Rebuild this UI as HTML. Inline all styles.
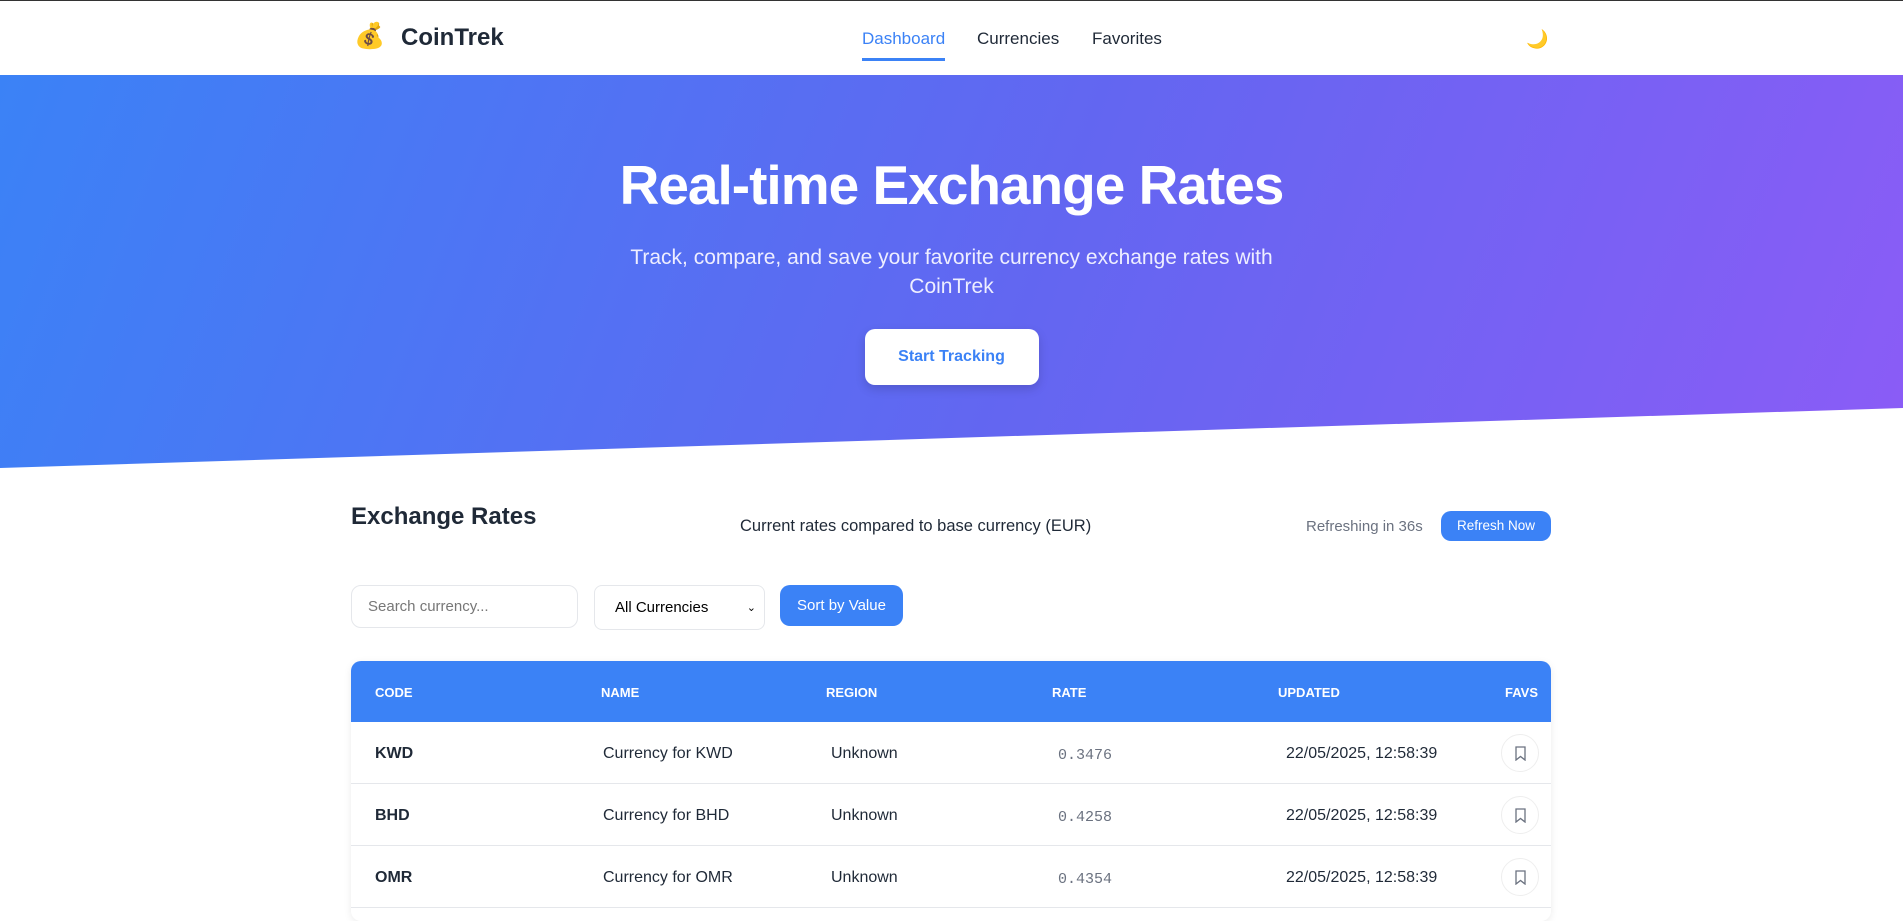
<!DOCTYPE html>
<html><head><meta charset="utf-8"><style>
*{box-sizing:border-box;margin:0;padding:0}
body{width:1903px;height:912px;overflow:hidden;background:#fff;font-family:"Liberation Sans",sans-serif;color:#1f2937;border-top:1px solid #333}
.nav{height:74px;position:relative}
.logo{position:absolute;left:354px;top:21px;font-size:25px}
.brand{position:absolute;left:401px;top:23px;font-size:24px;font-weight:700;color:#1f2937}
.links a{position:absolute;top:28px;font-size:17px;color:#1f2937;text-decoration:none}
.links a.act{color:#3b82f6;border-bottom:3px solid #3b82f6;padding-bottom:9px}
.moon{position:absolute;left:1526px;top:28px;font-size:18px}
.hero{position:absolute;top:75px;left:0;width:1903px;height:395px;background:linear-gradient(110deg,#3b82f6 0%,#6366f1 55%,#8b5cf6 100%);clip-path:polygon(0 0,100% 0,100% 333px,0 393px);text-align:center;color:#fff}
.hero h1{font-size:55px;font-weight:700;margin-top:78px;letter-spacing:-1px}
.hero p{font-size:21px;line-height:29px;width:700px;margin:26px auto 0;color:#eef}
.hero .btn{display:inline-block;margin-top:28px;width:174px;height:56px;line-height:56px;background:#fff;color:#3b82f6;border-radius:10px;font-weight:700;font-size:16px;box-shadow:0 4px 10px rgba(0,0,0,.15)}
.abs{position:absolute}
.table{position:absolute;left:351px;top:661px;width:1200px;height:260px;border-radius:10px;overflow:hidden;box-shadow:0 2px 8px rgba(0,0,0,.08)}
.th{height:61px;background:#3b82f6;color:#fff;font-size:13px;font-weight:700;position:relative}
.th span{position:absolute;top:24px}
.row{height:62px;border-bottom:1px solid #e5e7eb;position:relative;font-size:16px}
.row span{position:absolute;top:23px}
.mono{font-family:"Liberation Mono",monospace;color:#6b7280;font-size:15px}
.fav{position:absolute;left:1150px;top:12px;width:38px;height:38px;border:1px solid #eee;border-radius:50%}
</style></head><body>
<div class="nav">
<span class="logo">💰</span><span class="brand">CoinTrek</span>
<div class="links"><a class="act" style="left:862px">Dashboard</a><a style="left:977px">Currencies</a><a style="left:1092px">Favorites</a></div>
<span class="moon">🌙</span>
</div>
<div class="hero"><h1>Real-time Exchange Rates</h1><p>Track, compare, and save your favorite currency exchange rates with CoinTrek</p><div class="btn">Start Tracking</div></div>
<div class="abs" style="left:351px;top:503px;font-size:24px;font-weight:600">Exchange Rates</div>
<div class="abs" style="left:740px;top:517px;font-size:16.5px">Current rates compared to base currency (EUR)</div>
<div class="abs" style="left:1306px;top:518px;font-size:15px;color:#6b7280">Refreshing in 36s</div>
<div class="abs" style="left:1441px;top:511px;width:110px;height:30px;background:#3b82f6;color:#fff;border-radius:10px;font-size:13.5px;text-align:center;line-height:30px">Refresh Now</div>
<div class="abs" style="left:351px;top:585px;width:227px;height:43px;border:1px solid #e5e7eb;border-radius:10px;font-size:15px;color:#777;padding:12px 16px">Search currency...</div>
<div class="abs" style="left:594px;top:585px;width:171px;height:45px;border:1px solid #e5e7eb;border-radius:8px;font-size:15px;color:#000;padding:13px 20px">All Currencies<span style="position:absolute;right:8px;font-size:11px;top:15px">⌄</span></div>
<div class="abs" style="left:780px;top:585px;width:123px;height:41px;background:#3b82f6;color:#fff;border-radius:10px;font-size:15px;text-align:center;line-height:41px">Sort by Value</div>
<div class="table">
<div class="th"><span style="left:24px">CODE</span><span style="left:250px">NAME</span><span style="left:475px">REGION</span><span style="left:701px">RATE</span><span style="left:927px">UPDATED</span><span style="left:1154px">FAVS</span></div>
<div class="row"><span style="left:24px;font-weight:700">KWD</span><span style="left:252px">Currency for KWD</span><span style="left:480px">Unknown</span><span class="mono" style="left:707px;top:25px">0.3476</span><span style="left:935px">22/05/2025, 12:58:39</span><div class="fav"><svg style="position:absolute;left:13px;top:11px" width="11" height="15" viewBox="0 0 11 15" fill="none" stroke="#6b7280" stroke-width="1.3"><path d="M1 1h9v13l-4.5-3.5L1 14z"/></svg></div></div>
<div class="row"><span style="left:24px;font-weight:700">BHD</span><span style="left:252px">Currency for BHD</span><span style="left:480px">Unknown</span><span class="mono" style="left:707px;top:25px">0.4258</span><span style="left:935px">22/05/2025, 12:58:39</span><div class="fav"><svg style="position:absolute;left:13px;top:11px" width="11" height="15" viewBox="0 0 11 15" fill="none" stroke="#6b7280" stroke-width="1.3"><path d="M1 1h9v13l-4.5-3.5L1 14z"/></svg></div></div>
<div class="row"><span style="left:24px;font-weight:700">OMR</span><span style="left:252px">Currency for OMR</span><span style="left:480px">Unknown</span><span class="mono" style="left:707px;top:25px">0.4354</span><span style="left:935px">22/05/2025, 12:58:39</span><div class="fav"><svg style="position:absolute;left:13px;top:11px" width="11" height="15" viewBox="0 0 11 15" fill="none" stroke="#6b7280" stroke-width="1.3"><path d="M1 1h9v13l-4.5-3.5L1 14z"/></svg></div></div>
</div>
</body></html>
